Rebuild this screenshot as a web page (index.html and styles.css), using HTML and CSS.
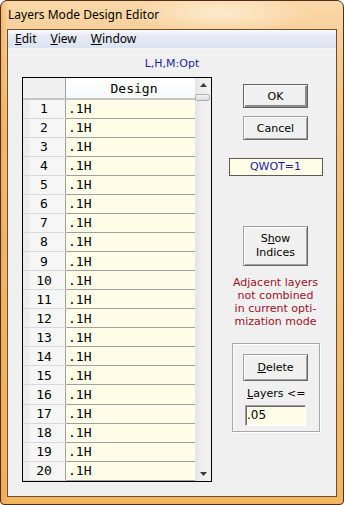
FILE: index.html
```html
<html>
    <head>
        <title>Layers Mode Design Editor</title>
        <link rel="stylesheet" href="styles.css">
    </head>
    <body>
        <div class="window">
            <div class="titlebar">Layers Mode Design Editor</div>
            <div class="client">
                <div class="menubar">
                    <span class="menu"><u>E</u>dit</span>
                    <span class="menu"><u>V</u>iew</span>
                    <span class="menu"><u>W</u>indow</span>
                </div>
                <div class="mode">L,H,M:Opt</div>
                <div class="content">
                    <div class="grid">
                        <table>
                            <thead>
                                <tr><th class="corner"></th><th class="colhead">Design</th></tr>
                            </thead>
                            <tbody>
                                <tr><td class="rowhead">1</td><td class="cell">.1H</td></tr>
                                <tr><td class="rowhead">2</td><td class="cell">.1H</td></tr>
                                <tr><td class="rowhead">3</td><td class="cell">.1H</td></tr>
                                <tr><td class="rowhead">4</td><td class="cell">.1H</td></tr>
                                <tr><td class="rowhead">5</td><td class="cell">.1H</td></tr>
                                <tr><td class="rowhead">6</td><td class="cell">.1H</td></tr>
                                <tr><td class="rowhead">7</td><td class="cell">.1H</td></tr>
                                <tr><td class="rowhead">8</td><td class="cell">.1H</td></tr>
                                <tr><td class="rowhead">9</td><td class="cell">.1H</td></tr>
                                <tr><td class="rowhead">10</td><td class="cell">.1H</td></tr>
                                <tr><td class="rowhead">11</td><td class="cell">.1H</td></tr>
                                <tr><td class="rowhead">12</td><td class="cell">.1H</td></tr>
                                <tr><td class="rowhead">13</td><td class="cell">.1H</td></tr>
                                <tr><td class="rowhead">14</td><td class="cell">.1H</td></tr>
                                <tr><td class="rowhead">15</td><td class="cell">.1H</td></tr>
                                <tr><td class="rowhead">16</td><td class="cell">.1H</td></tr>
                                <tr><td class="rowhead">17</td><td class="cell">.1H</td></tr>
                                <tr><td class="rowhead">18</td><td class="cell">.1H</td></tr>
                                <tr><td class="rowhead">19</td><td class="cell">.1H</td></tr>
                                <tr><td class="rowhead">20</td><td class="cell">.1H</td></tr>
                            </tbody>
                        </table>
                        <div class="scrollbar">
                            <div class="arrow">
                                <svg width="7" height="4" viewBox="0 0 7 4"><path d="M3.5 0L7 4H0z" fill="#3c3c3c"/></svg>
                            </div>
                            <div class="thumb"></div>
                            <div class="track"></div>
                            <div class="arrow">
                                <svg width="7" height="4" viewBox="0 0 7 4"><path d="M0 0H7L3.5 4z" fill="#3c3c3c"/></svg>
                            </div>
                        </div>
                    </div>
                    <div class="side">
                        <div class="button default"><span>OK</span></div>
                        <div class="button cancel"><span>Cancel</span></div>
                        <div class="qwot">QWOT=1</div>
                        <div class="button indices"><span>S<u>h</u>ow<br>Indices</span></div>
                        <div class="note">Adjacent layers<br>not combined<br>in current opti-<br>mization mode</div>
                        <div class="groupbox">
                            <div class="button delete"><span><u>D</u>elete</span></div>
                            <div class="label"><u>L</u>ayers &lt;=</div>
                            <div class="field">.05</div>
                        </div>
                    </div>
                </div>
            </div>
        </div>
    </body>
</html>
```

FILE: styles.css
```css
body {
    margin: 0;
    background: #fff;
}
.window {
    width: 344px;
    height: 505px;
    box-sizing: border-box;
    border: 1px solid #4e2f1f;
    border-radius: 7px 7px 4px 4px;
    padding: 0 6px 7px 6px;
    background:
        radial-gradient(ellipse 90px 20px at 220px 12px, rgba(255, 240, 215, 0.8), rgba(255, 240, 215, 0)),
        linear-gradient(to right, rgba(238, 160, 70, 0.55) 0, rgba(238, 160, 70, 0) 7px),
        linear-gradient(to bottom, #fad8a8 0, #f8d19c 28px, #f4c17a 120px, #f2b661 100%);
}
.titlebar {
    height: 28px;
    line-height: 28px;
    padding-left: 1px;
    font-family: "Noto Sans", sans-serif;
    font-size: 12px;
    color: #000;
}
.client {
    height: 468px;
    box-sizing: border-box;
    border: 1px solid #6d4b2d;
    background: #f0f0f0;
}
.menubar {
    height: 18px;
    display: flex;
    background: linear-gradient(to bottom, #fbfcfe 0, #e6eaf5 30%, #dce2f0 100%);
    border-bottom: 1px solid #f4f5f8;
    font-family: "Noto Sans", sans-serif;
    font-size: 12px;
    line-height: 18px;
}
.menu {
    padding: 0 7px;
}
.mode {
    margin-top: 8px;
    height: 13px;
    line-height: 13px;
    text-align: center;
    font-family: "DejaVu Sans", sans-serif;
    font-size: 11px;
    color: #1f1f9e;
}
.content {
    display: flex;
    margin-top: 7px;
    padding-left: 14px;
}
.grid {
    display: flex;
    width: 190px;
    height: 405px;
    box-sizing: border-box;
    border: 1px solid #000;
    background: #fff;
}
table {
    width: 172px;
    border-collapse: collapse;
    table-layout: fixed;
    font-family: "DejaVu Sans Mono", monospace;
    font-size: 13px;
}
th, td {
    padding: 0;
}
.corner {
    width: 42px;
    height: 21px;
    background: #f0f0f0;
    border-right: 1px solid #a0a0a0;
    border-bottom: 2px solid #c4c4c4;
}
.colhead {
    height: 21px;
    padding-left: 7px;
    font-weight: normal;
    text-align: center;
    background: linear-gradient(to bottom, #ffffff, #f7f8fa);
    border-bottom: 2px solid #c4c4c4;
}
.rowhead {
    height: 18px;
    text-align: center;
    background: linear-gradient(to right, #ececec 0, #ececec 6px, #f6f6f6 7px);
    border-right: 1px solid #a0a0a0;
    border-bottom: 1px solid #d8d8d8;
}
.cell {
    height: 18px;
    padding-left: 2px;
    background: #fffde8;
    border-bottom: 1px solid #a0a0a0;
}
.scrollbar {
    width: 16px;
    display: flex;
    flex-direction: column;
    background: linear-gradient(to right, #e3e3e3, #eeeeee 40%, #f3f3f3);
}
.arrow {
    height: 14px;
    display: flex;
    align-items: center;
    justify-content: center;
    padding-left: 1px;
}
.thumb {
    height: 7px;
    margin: 2px 1px 0 0;
    box-sizing: border-box;
    border: 1px solid #b0b0b0;
    border-radius: 2px;
    background: linear-gradient(to bottom, #f4f4f4, #dcdcdc);
}
.track {
    flex: 1;
}
.side {
    flex: 1;
    display: flex;
    flex-direction: column;
    align-items: center;
    padding-left: 3px;
    font-family: "DejaVu Sans", sans-serif;
    font-size: 11px;
}
.button {
    width: 65px;
    height: 24px;
    box-sizing: border-box;
    display: flex;
    align-items: center;
    justify-content: center;
    text-align: center;
    background: #f0f0f0;
    border: 1px solid;
    border-color: #a0a0a0 #696969 #696969 #a0a0a0;
    box-shadow: inset 1px 1px 0 #ffffff, inset -1px -1px 0 #a0a0a0;
    color: #000;
}
.default {
    margin-top: 7px;
    border-color: #646464;
    box-shadow: inset 1px 1px 0 #ffffff, inset -2px -2px 0 #8a8a8a;
}
.cancel {
    margin-top: 8px;
}
.qwot {
    margin-top: 18px;
    width: 94px;
    height: 18px;
    box-sizing: border-box;
    border: 1px solid #5a5a5a;
    background: #fffde8;
    color: #2020a8;
    text-align: center;
    line-height: 16px;
}
.indices {
    margin-top: 50px;
    height: 40px;
    line-height: 14px;
}
.note {
    margin-top: 10px;
    line-height: 13px;
    text-align: center;
    color: #9e1028;
}
.groupbox {
    margin-top: 15px;
    width: 88px;
    height: 89px;
    box-sizing: border-box;
    display: flex;
    flex-direction: column;
    align-items: center;
    border: 1px solid #a8a8a8;
    box-shadow: inset 1px 1px 0 #ffffff, 1px 1px 0 #ffffff;
}
.delete {
    margin-top: 10px;
    height: 27px;
}
.label {
    width: 61px;
    margin-top: 6px;
    padding-left: 2px;
    box-sizing: border-box;
    line-height: 13px;
}
.field {
    margin-top: 5px;
    width: 61px;
    height: 21px;
    box-sizing: border-box;
    padding-left: 1px;
    border: 1px solid;
    border-color: #a0a0a0 #ffffff #ffffff #a0a0a0;
    box-shadow: inset 1px 1px 0 #696969;
    background: #fffde8;
    font-size: 12px;
    line-height: 19px;
}
```
